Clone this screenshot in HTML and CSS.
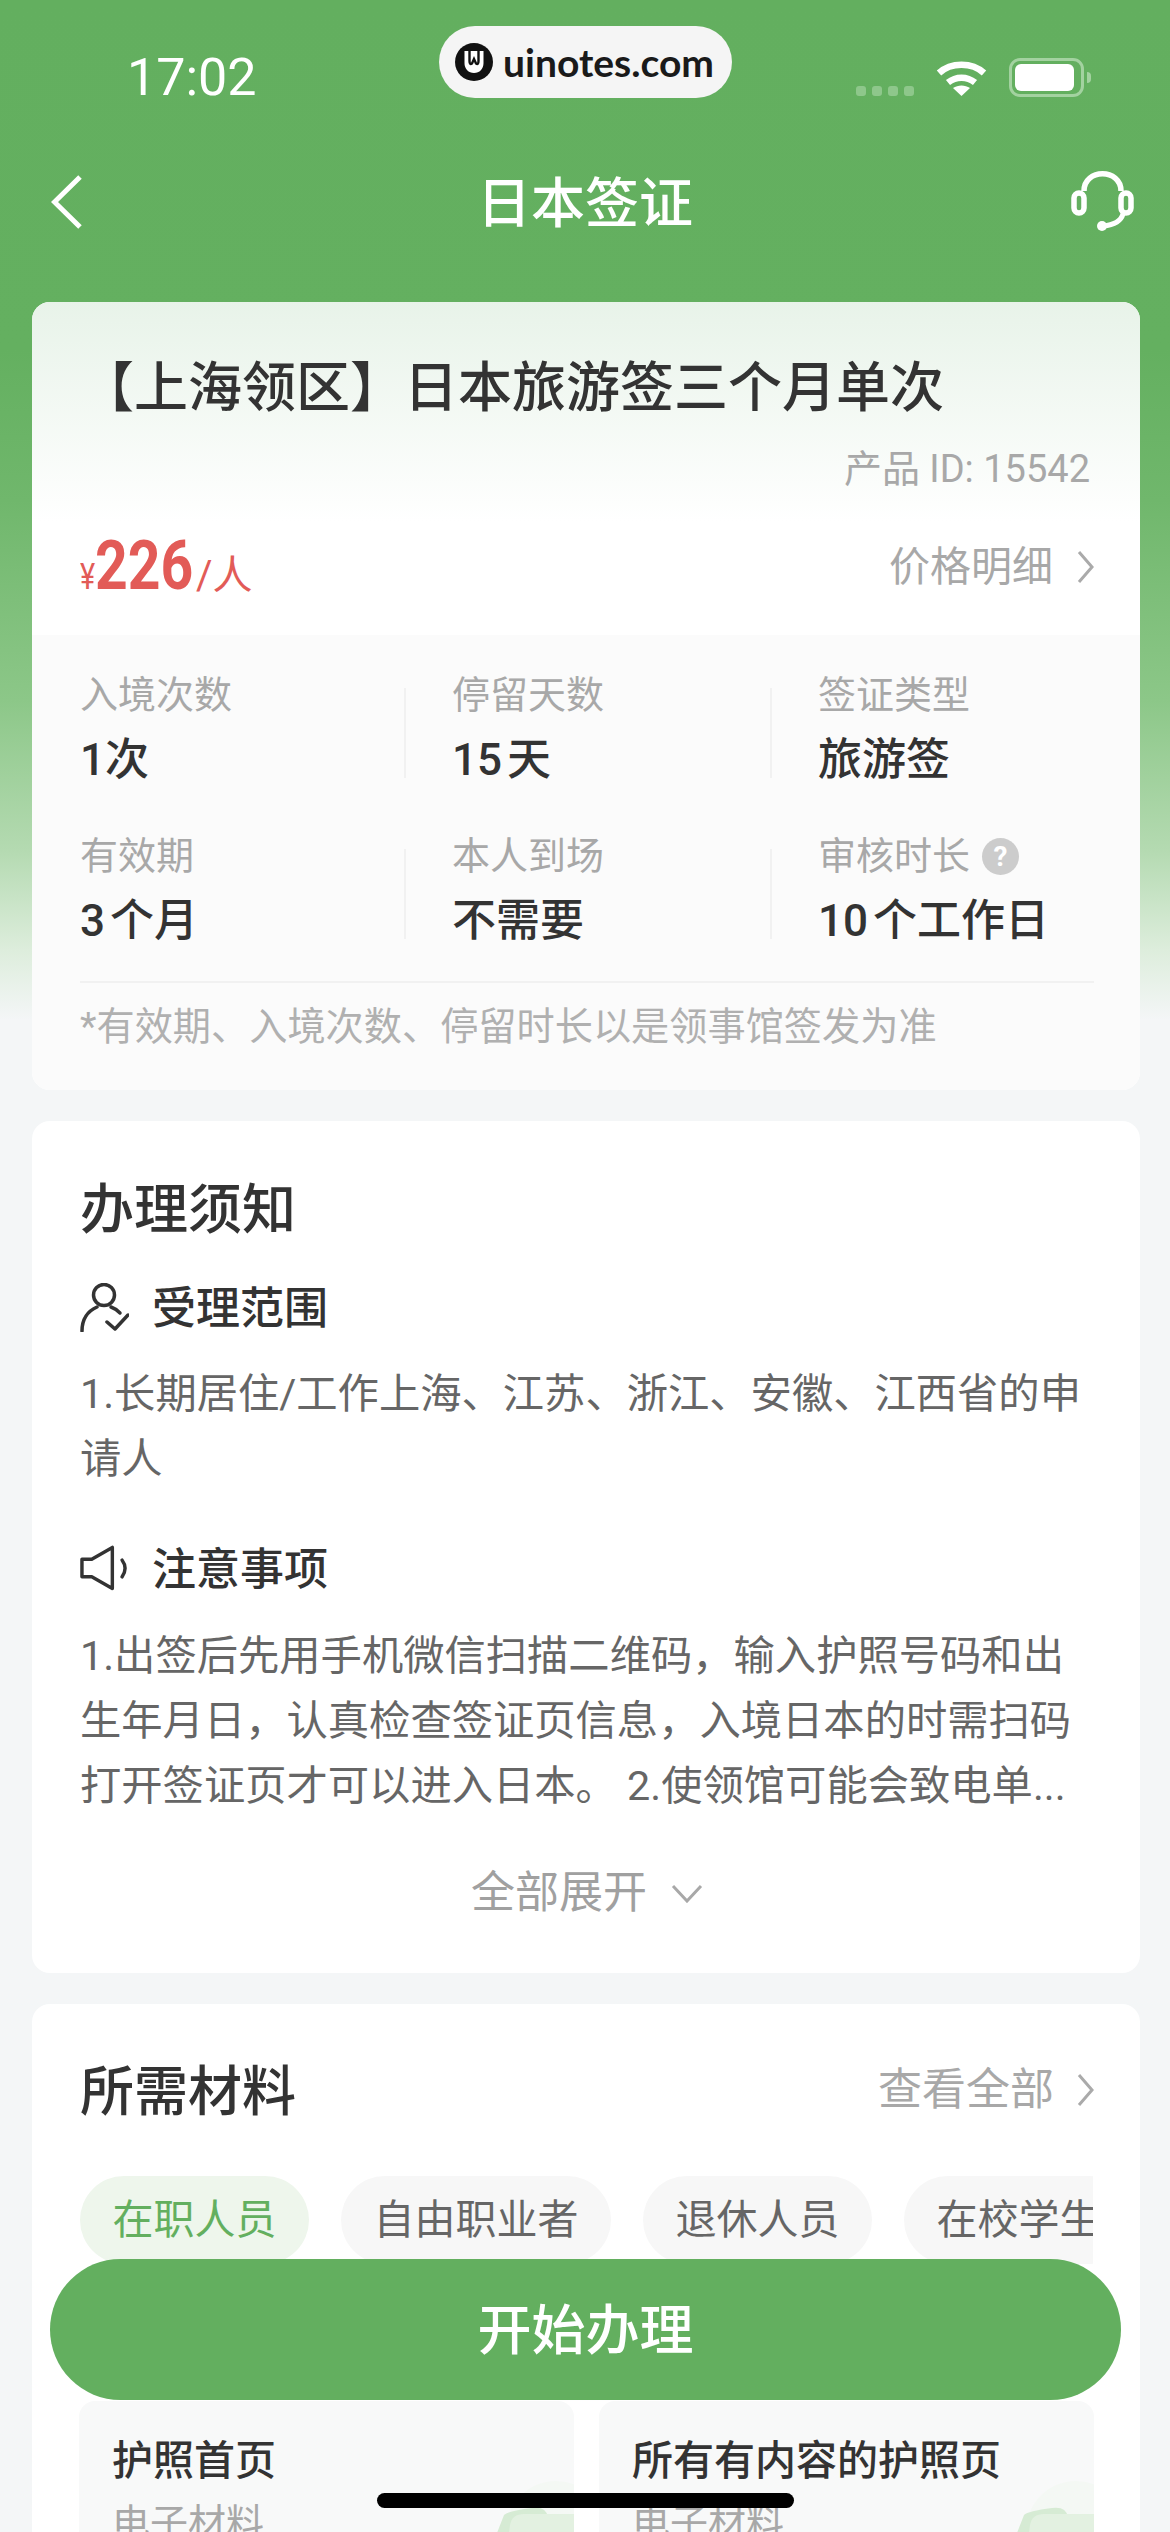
FILE: index.html
```html
<!DOCTYPE html>
<html lang="zh-CN">
<head>
<meta charset="utf-8">
<title>日本签证</title>
<link rel="stylesheet" href="styles.css">
</head>
<body>
<div class="page">
  <div class="status">
    <span class="time">17:02</span>
    <div class="status-right">
      <div class="signal"><i></i><i></i><i></i><i></i></div>
      <svg class="wifi" width="51" height="37" viewBox="0 0 51 37"><path d="M3 14C15 3 36 3 48 14" fill="none" stroke="#fff" stroke-width="6.5"/><path d="M12 23.500C20 17 31 17 39 23.500" fill="none" stroke="#fff" stroke-width="6.500"/><path d="M25.500 37L17 29C22 25.500 29 25.500 34 29Z" fill="#fff"/></svg>
      <div class="battery"><div class="battery-fill"></div></div>
      <div class="battery-cap"></div>
    </div>
  </div>

  <div class="nav">
    <svg class="back" width="31" height="54" viewBox="0 0 31 54"><path d="M29 2L3.500 27L29 52" fill="none" stroke="#fff" stroke-width="5"/></svg>
    <div class="nav-title">日本签证</div>
    <svg class="headset" width="63" height="60" viewBox="0 0 63 60"><path d="M13 20C13 -3 50 -3 50 20" fill="none" stroke="#fff" stroke-width="5.500"/><rect x="3" y="22" width="10" height="20" rx="5" fill="none" stroke="#fff" stroke-width="5.500"/><rect x="50" y="22" width="10" height="20" rx="5" fill="none" stroke="#fff" stroke-width="5.500"/><path d="M52 43C50 50 42 54 32 55" fill="none" stroke="#fff" stroke-width="5"/><circle cx="31" cy="55" r="5" fill="#fff"/></svg>
  </div>

  <section class="card card-product">
    <div class="product-top">
      <h1 class="product-title">【上海领区】日本旅游签三个月单次</h1>
      <div class="product-id">产品 ID: 15542</div>
      <div class="price-row">
        <div class="price"><span class="yen">¥</span><span class="amount">226</span><span class="unit">/人</span></div>
        <div class="link link-price">价格明细<svg class="chev" width="17" height="34" viewBox="0 0 17 34"><path d="M2 2L15 17L2 32" fill="none" stroke="#aaa" stroke-width="3"/></svg></div>
      </div>
    </div>
    <div class="product-info">
      <div class="info-grid">
        <div class="cell"><div class="label">入境次数</div><div class="value">1次</div></div>
        <div class="cell cell-div"><div class="label">停留天数</div><div class="value"><span class="num">15</span>天</div></div>
        <div class="cell cell-div"><div class="label">签证类型</div><div class="value">旅游签</div></div>
        <div class="cell"><div class="label">有效期</div><div class="value"><span class="num">3</span>个月</div></div>
        <div class="cell cell-div"><div class="label">本人到场</div><div class="value">不需要</div></div>
        <div class="cell cell-div"><div class="label">审核时长<span class="help">?</span></div><div class="value"><span class="num">10</span>个工作日</div></div>
      </div>
      <div class="note">*有效期、入境次数、停留时长以是领事馆签发为准</div>
    </div>
  </section>

  <section class="card card-notice">
    <h2 class="card-title">办理须知</h2>
    <div class="sub-head sub-first">
      <svg width="49" height="49" viewBox="0 0 49 49"><circle cx="24" cy="12" r="10.500" fill="none" stroke="#333" stroke-width="3.500"/><path d="M2 48C2 36 8 28 17 24" fill="none" stroke="#333" stroke-width="3.500" stroke-linecap="round"/><path d="M31 24C34 25 37 27 40 30" fill="none" stroke="#333" stroke-width="3.500" stroke-linecap="round"/><path d="M27 39L35 46L48 32" fill="none" stroke="#333" stroke-width="3.500" stroke-linecap="round" stroke-linejoin="round"/></svg>
      <span>受理范围</span>
    </div>
    <p class="body-text">1.长期居住/工作上海、江苏、浙江、安徽、江西省的申请人</p>
    <div class="sub-head sub-second">
      <svg width="49" height="46" viewBox="0 0 50 46"><path d="M2 14H12L33 2V44L12 32H2Z" fill="none" stroke="#333" stroke-width="3.500" stroke-linejoin="round"/><path d="M43 15Q49 23 43 32" fill="none" stroke="#333" stroke-width="3.500" stroke-linecap="round"/></svg>
      <span>注意事项</span>
    </div>
    <p class="body-text body-long">1.出签后先用手机微信扫描二维码，输入护照号码和出生年月日，认真检查签证页信息，入境日本的时需扫码打开签证页才可以进入日本。 2.使领馆可能会致电单...</p>
    <div class="expand">全部展开<svg width="32" height="19" viewBox="0 0 32 19"><path d="M2 2L16 17L30 2" fill="none" stroke="#a8a8a8" stroke-width="3"/></svg></div>
  </section>

  <section class="card card-materials">
    <div class="card-head">
      <h2 class="card-title">所需材料</h2>
      <div class="link link-all">查看全部<svg class="chev" width="17" height="34" viewBox="0 0 17 34"><path d="M2 2L15 17L2 32" fill="none" stroke="#aaa" stroke-width="3"/></svg></div>
    </div>
    <div class="tabs">
      <div class="tab tab-active">在职人员</div>
      <div class="tab">自由职业者</div>
      <div class="tab">退休人员</div>
      <div class="tab">在校学生</div>
    </div>
    <div class="items">
      <div class="item">
        <div class="item-title">护照首页</div>
        <div class="item-sub">电子材料</div>
        <svg class="item-deco" width="100" height="52" viewBox="0 0 100 52"><circle cx="82" cy="50" r="50" fill="#f4f8f4"/><path d="M30 34Q34 30 58 27Q72 25 74 36V52H23Z" fill="#d6ebd4"/><path d="M36 44Q38 33 50 33H100V52H35Z" fill="#e3f1e1"/></svg>
      </div>
      <div class="item">
        <div class="item-title">所有有内容的护照页</div>
        <div class="item-sub">电子材料</div>
        <svg class="item-deco" width="100" height="52" viewBox="0 0 100 52"><circle cx="82" cy="50" r="50" fill="#f4f8f4"/><path d="M30 34Q34 30 58 27Q72 25 74 36V52H23Z" fill="#d6ebd4"/><path d="M36 44Q38 33 50 33H100V52H35Z" fill="#e3f1e1"/></svg>
      </div>
    </div>
  </section>

  <div class="watermark">
    <svg width="38" height="38" viewBox="0 0 38 38"><circle cx="19" cy="19" r="19" fill="#111"/><path d="M9.500 8H28.500V20C28.500 26 24.500 30 19 30C13.500 30 9.500 26 9.500 20Z" fill="#fff"/><path d="M14.500 7V18Q14.500 22 17 20.500L19 16L21 20.500Q23.500 22 23.500 18V7" fill="none" stroke="#111" stroke-width="2.400"/></svg>
    <span>uinotes.com</span>
  </div>
  <div class="cta">开始办理</div>
  <div class="home-bar"></div>
</div>
</body>
</html>
```

FILE: styles.css
```css
* { box-sizing: border-box; }
html, body { margin: 0; padding: 0; }
body {
  font-family: Roboto, "Noto Sans CJK SC", sans-serif;
  color: #333;
}
h1, h2, p { margin: 0; font-weight: inherit; }

.page {
  position: relative;
  width: 1170px;
  height: 2532px;
  overflow: hidden;
  background: linear-gradient(180deg, #63af5f 0, #64b060 350px, #70b76c 500px, #8cc788 700px, #b4dab1 850px, #ddeddc 950px, #f4f6f7 1020px);
}

/* status bar */
.status {
  height: 130px;
  padding: 0 79px 0 127px;
  display: flex;
  justify-content: space-between;
  color: #fff;
}
.time {
  margin-top: 54px;
  font-size: 52px;
  line-height: 48px;
  font-weight: 400;
}
.status-right {
  display: flex;
  align-items: flex-end;
  height: 39px;
  margin-top: 58px;
}
.signal { display: flex; gap: 6px; margin-right: 22px; margin-bottom: 1px; }
.signal i { width: 10px; height: 10px; border-radius: 3px; background: #8ec78b; display: block; }
.wifi { margin-right: 22px; margin-bottom: 1px; }
.battery {
  width: 75px;
  height: 39px;
  border: 3px solid #a3d2a0;
  border-radius: 11px;
  padding: 3px;
  padding-right: 7px;
}
.battery-fill { width: 100%; height: 100%; background: #fff; border-radius: 6px; }
.battery-cap {
  width: 4px;
  height: 11px;
  margin: 0 0 14px 3px;
  background: #a3d2a0;
  border-radius: 0 5px 5px 0;
}

/* nav */
.nav {
  height: 144px;
  margin-bottom: 28px;
  padding: 0 36px;
  display: grid;
  grid-template-columns: 1fr auto 1fr;
  align-items: center;
}
.back { margin-left: 15px; }
.nav-title { color: #fff; font-size: 54px; line-height: 60px; font-weight: 500; padding-top: 5px; }
.headset { justify-self: end; margin-top: -2px; }

/* cards */
.card {
  margin: 0 30px 31px 32px;
  background: #fff;
  border-radius: 18px;
  overflow: hidden;
}
.card-notice, .card-materials { padding: 0 46px 0 48px; }
.card-notice { padding-top: 64px; padding-bottom: 58px; }
.card-materials { padding-top: 63px; height: 700px; }

.product-top {
  height: 333px;
  padding: 60px 46px 0 48px;
  background: linear-gradient(180deg, #e8f3e9 0, #fff 220px);
}
.product-title { font-size: 54px; line-height: 54px; font-weight: 500; color: #333; }
.product-id {
  margin-top: 35px;
  padding-right: 4px;
  text-align: right;
  font-size: 38px;
  line-height: 36px;
  color: #a8a8a8;
}
.price-row {
  margin-top: 46px;
  display: flex;
  justify-content: space-between;
  align-items: center;
}
.price { display: flex; align-items: baseline; color: #e25b57; line-height: 66px; }
.yen {
  font-size: 36px;
  display: inline-block;
  transform: scaleX(0.8);
  transform-origin: left center;
  margin-right: -4px;
}
.amount {
  font-size: 68px;
  font-weight: 700;
  display: inline-block;
  transform: scaleX(0.84);
  transform-origin: left center;
  margin-right: -16px;
}
.unit { font-size: 40px; }
.link { display: flex; align-items: center; color: #a8a8a8; font-size: 41px; line-height: 44px; }
.link-price { margin-bottom: 10px; }
.link-price .chev { margin-left: 24px; }
.link-all .chev { margin-left: 23px; }
.link-all { font-size: 44px; margin-bottom: 6px; }

.product-info {
  padding: 41px 46px 44px 48px;
  background: #fbfbfb;
}
.info-grid {
  display: grid;
  grid-template-columns: 324px 366px 1fr;
  row-gap: 55px;
  padding-bottom: 38px;
  border-bottom: 2px solid #f1f1f1;
}
.cell { position: relative; }
.cell-div { padding-left: 48px; }
.cell-div::before {
  content: "";
  position: absolute;
  left: 0;
  top: 12px;
  bottom: 4px;
  width: 2px;
  background: #f1f1f1;
}
.label { display: flex; align-items: center; font-size: 38px; line-height: 38px; color: #a8a8a8; }
.value { margin-top: 24px; font-size: 44px; line-height: 44px; font-weight: 500; color: #333; }
.num { margin-right: 5px; }
.help {
  width: 37px;
  height: 37px;
  margin-left: 12px;
  border-radius: 50%;
  background: #ccc;
  color: #fff;
  font-size: 28px;
  line-height: 37px;
  font-weight: 700;
  text-align: center;
}
.note { margin-top: 25px; font-size: 38.2px; line-height: 38px; color: #b0b0b0; }

.card-head { display: flex; justify-content: space-between; align-items: center; }
.card-title { font-size: 54px; line-height: 52px; font-weight: 500; color: #333; }
.sub-head {
  display: flex;
  align-items: center;
  height: 50px;
  font-size: 44px;
  font-weight: 500;
  color: #333;
}
.sub-head svg { margin-right: 23px; flex: none; }
.sub-head span { margin-bottom: 5px; }
.sub-first { margin-top: 45px; }
.sub-second { margin-top: 51px; }
.body-text { margin-top: 30px; font-size: 41.3px; line-height: 65px; color: #666; }
.body-long { margin-top: 31px; }
.expand {
  margin-top: 52px;
  display: flex;
  justify-content: center;
  align-items: center;
  font-size: 44px;
  line-height: 44px;
  color: #a0a0a0;
}
.expand svg { margin-left: 24px; }

.tabs { margin-top: 57px; width: 1013px; display: flex; gap: 32px; overflow: hidden; }
.tab {
  flex: none;
  height: 88px;
  padding: 0 32.5px;
  border-radius: 44px;
  background: #f7f7f7;
  color: #666;
  font-size: 41px;
  line-height: 88px;
}
.tab-active { background: #eef6ec; color: #63af5f; }

.items {
  margin-top: 137px;
  display: grid;
  grid-template-columns: 495px 495px;
  gap: 25px;
  margin-left: -1px;
}
.item {
  position: relative;
  height: 220px;
  padding: 39px 0 0 33px;
  background: #f8f9f9;
  border-radius: 16px;
  overflow: hidden;
}
.item-title { font-size: 41px; line-height: 42px; font-weight: 500; color: #333; }
.item-sub { margin-top: 23px; font-size: 38px; line-height: 37px; color: #a8a8a8; }
.item-deco { position: absolute; right: 0; top: 80px; }

/* overlays */
.watermark {
  position: absolute;
  left: 439px;
  top: 26px;
  width: 293px;
  height: 72px;
  padding-left: 16px;
  display: flex;
  align-items: center;
  gap: 10px;
  background: #f5f5f5;
  border-radius: 36px;
  color: #1a1a1a;
  font-family: Lato, sans-serif;
  font-size: 39px;
  font-weight: 700;
}
.cta {
  position: absolute;
  left: 50px;
  top: 2259px;
  width: 1071px;
  height: 141px;
  border-radius: 71px;
  background: #63af5f;
  color: #fff;
  font-size: 54px;
  line-height: 146px;
  font-weight: 500;
  text-align: center;
}
.home-bar {
  position: absolute;
  left: 377px;
  top: 2493px;
  width: 417px;
  height: 15px;
  border-radius: 8px;
  background: #000;
}
```
